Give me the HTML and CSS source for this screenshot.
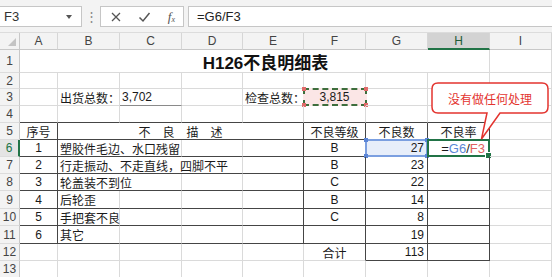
FILE: index.html
```html
<!DOCTYPE html>
<html>
<head>
<meta charset="utf-8">
<link rel="stylesheet" href="styles.css">
</head>
<body>
<div class="app">
  <div class="toolbar">
    <div class="namebox"><span>F3</span><span class="dd"></span></div>
    <div class="dots">⋮</div>
    <div class="fbtns">
      <svg width="12" height="12" viewBox="0 0 12 12"><path d="M2 2 L10 10 M10 2 L2 10" stroke="#555" stroke-width="1.3" fill="none"/></svg>
      <svg width="13" height="12" viewBox="0 0 13 12"><path d="M1.5 6.5 L5 10 L11.5 2" stroke="#555" stroke-width="1.5" fill="none"/></svg>
      <span class="fx">f<sub>x</sub></span>
    </div>
    <div class="finput">=G6/F3</div>
  </div>
  <div class="sheet">
    <!-- header row -->
    <div class="corner"><span class="tri"></span></div>
    <div class="ch">A</div><div class="ch">B</div><div class="ch">C</div><div class="ch">D</div><div class="ch">E</div><div class="ch">F</div><div class="ch">G</div><div class="ch hsel">H</div><div class="ch">I</div>
    <!-- row 1 -->
    <div class="rh">1</div>
    <div class="c title span8">H126不良明细表</div>
    <div class="c"></div>
    <!-- row 2 -->
    <div class="rh">2</div>
    <div class="c"></div><div class="c"></div><div class="c"></div><div class="c"></div><div class="c"></div><div class="c"></div><div class="c"></div><div class="c"></div><div class="c"></div>
    <!-- row 3 -->
    <div class="rh">3</div>
    <div class="c"></div>
    <div class="c">出货总数：</div>
    <div class="c ul">3,702</div>
    <div class="c"></div>
    <div class="c">检查总数：</div>
    <div class="c ctr marqcell"><div class="marq"><i class="k tl"></i><i class="k tr"></i><i class="k bl"></i><i class="k br2"></i></div><span class="mtext">3,815</span></div>
    <div class="c"></div><div class="c"></div><div class="c"></div>
    <!-- row 4 -->
    <div class="rh">4</div>
    <div class="c bb"></div><div class="c bb"></div><div class="c bb"></div><div class="c bb"></div><div class="c bb"></div><div class="c bb"></div><div class="c bb"></div><div class="c bb"></div><div class="c"></div>
    <!-- row 5 -->
    <div class="rh">5</div>
    <div class="c ctr bb br">序号</div>
    <div class="c ctr bb br span4">不　良　描　述</div>
    <div class="c ctr bb br">不良等级</div>
    <div class="c ctr bb br">不良数</div>
    <div class="c ctr bb br">不良率</div>
    <div class="c"></div>
    <!-- row 6 -->
    <div class="rh rsel">6</div>
    <div class="c ctr bb br">1</div>
    <div class="c bb span2">塑胶件毛边、水口残留</div>
    <div class="c bb"></div>
    <div class="c bb br"></div>
    <div class="c ctr bb br">B</div>
    <div class="c num bb br refcell"><div class="ref"><i class="k tl"></i><i class="k tr"></i><i class="k bl"></i><i class="k br2"></i></div><span class="rtext">27</span></div>
    <div class="c num bb br active"><div class="act"><i class="fh"></i></div><span class="ftext">=<span class="blue">G6</span>/<span class="red">F3</span></span></div>
    <div class="c"></div>
    <!-- row 7 -->
    <div class="rh">7</div>
    <div class="c ctr bb br">2</div>
    <div class="c bb span3">行走振动、不走直线，四脚不平</div>
    <div class="c bb br"></div>
    <div class="c ctr bb br">B</div>
    <div class="c num bb br">23</div>
    <div class="c bb br"></div>
    <div class="c"></div>
    <!-- row 8 -->
    <div class="rh">8</div>
    <div class="c ctr bb br">3</div>
    <div class="c bb span2">轮盖装不到位</div>
    <div class="c bb"></div>
    <div class="c bb br"></div>
    <div class="c ctr bb br">C</div>
    <div class="c num bb br">22</div>
    <div class="c bb br"></div>
    <div class="c"></div>
    <!-- row 9 -->
    <div class="rh">9</div>
    <div class="c ctr bb br">4</div>
    <div class="c bb">后轮歪</div>
    <div class="c bb"></div>
    <div class="c bb"></div>
    <div class="c bb br"></div>
    <div class="c ctr bb br">B</div>
    <div class="c num bb br">14</div>
    <div class="c bb br"></div>
    <div class="c"></div>
    <!-- row 10 -->
    <div class="rh">10</div>
    <div class="c ctr bb br">5</div>
    <div class="c bb">手把套不良</div>
    <div class="c bb"></div>
    <div class="c bb"></div>
    <div class="c bb br"></div>
    <div class="c ctr bb br">C</div>
    <div class="c num bb br">8</div>
    <div class="c bb br"></div>
    <div class="c"></div>
    <!-- row 11 -->
    <div class="rh">11</div>
    <div class="c ctr bb br">6</div>
    <div class="c bb">其它</div>
    <div class="c bb"></div>
    <div class="c bb"></div>
    <div class="c bb br"></div>
    <div class="c ctr bb br"></div>
    <div class="c num bb br">19</div>
    <div class="c bb br"></div>
    <div class="c"></div>
    <!-- row 12 -->
    <div class="rh">12</div>
    <div class="c"></div><div class="c"></div><div class="c"></div><div class="c"></div><div class="c"></div>
    <div class="c ctr br">合计</div>
    <div class="c num bb br">113</div>
    <div class="c bb br"></div>
    <div class="c"></div>
    <!-- row 13 -->
    <div class="rh">13</div>
    <div class="c"></div><div class="c"></div><div class="c"></div><div class="c"></div><div class="c"></div><div class="c"></div><div class="c"></div><div class="c"></div><div class="c"></div>
  </div>
  <div class="callout">
    <svg class="bubble" width="127" height="62" viewBox="0 0 127 62"><path d="M13 3 H117 Q123 3 123 9 V27 Q123 33 117 33 H75 L56.5 59 L62 33 H13 Q7 33 7 27 V9 Q7 3 13 3 Z" fill="#fff" stroke="#e3342f" stroke-width="1.5"/></svg>
    <div class="ctext">没有做任何处理</div>
  </div>
</div>
</body>
</html>
```

FILE: styles.css
```css
html, body {
  margin: 0;
  padding: 0;
}
body {
  width: 552px;
  height: 277px;
  overflow: hidden;
  background: #fff;
  font-family: "Liberation Sans", "Noto Sans CJK SC", sans-serif;
  font-size: 12px;
  color: #1a1a1a;
}
.app {
  position: relative;
  width: 552px;
  height: 277px;
  overflow: hidden;
}
.toolbar {
  height: 33px;
  box-sizing: border-box;
  padding-top: 6px;
  background: #f3f3f3;
  border-bottom: 1px solid #dcdcdc;
  display: flex;
  align-items: flex-start;
}
.namebox {
  width: 83px;
  height: 21px;
  margin-left: -1px;
  box-sizing: border-box;
  background: #fff;
  border: 1px solid #c6c6c6;
  display: flex;
  align-items: center;
  justify-content: space-between;
  padding: 0 9px 0 4px;
  font-size: 13px;
  color: #333;
}
.dd {
  width: 0;
  height: 0;
  border-left: 3px solid transparent;
  border-right: 3px solid transparent;
  border-top: 4px solid #555;
}
.dots {
  width: 18px;
  height: 21px;
  line-height: 21px;
  text-align: center;
  color: #888;
  font-size: 13px;
}
.fbtns {
  width: 84px;
  height: 21px;
  box-sizing: border-box;
  background: #fff;
  border: 1px solid #c6c6c6;
  display: flex;
  align-items: center;
  justify-content: space-between;
  padding: 0 8px 0 9px;
}
.fx {
  font-family: "Liberation Serif", serif;
  font-style: italic;
  font-size: 13px;
  color: #555;
}
.fx sub {
  font-size: 8px;
  vertical-align: -1px;
}
.finput {
  flex: 1;
  height: 21px;
  margin-left: 4px;
  margin-right: -1px;
  box-sizing: border-box;
  background: #fff;
  border: 1px solid #c6c6c6;
  padding-left: 8px;
  line-height: 19px;
  font-size: 13px;
  color: #222;
}
.sheet {
  display: grid;
  grid-template-columns: 20px 38px 62px 62px 61px 61px 62px 62px 62px 62px;
  grid-template-rows: 17px 23px 16px 17px 17px 17px 17px 17px 17px 18px 17px 18px 17px 17px;
}
.corner {
  position: relative;
  background: #f3f3f3;
  border-right: 1px solid #c8c8c8;
  border-bottom: 1px solid #c8c8c8;
  box-sizing: border-box;
}
.tri {
  position: absolute;
  right: 3px;
  bottom: 3px;
  width: 0;
  height: 0;
  border-left: 8px solid transparent;
  border-bottom: 8px solid #c4c4c4;
}
.ch {
  background: #f3f3f3;
  border-right: 1px solid #d6d6d6;
  border-bottom: 1px solid #c8c8c8;
  box-sizing: border-box;
  display: flex;
  align-items: center;
  justify-content: center;
  color: #444;
  font-size: 12px;
}
.hsel {
  background: #d3d3d3;
  border-bottom: 2px solid #217346;
  color: #1f5c38;
}
.rh {
  background: #f3f3f3;
  border-right: 1px solid #c8c8c8;
  border-bottom: 1px solid #dcdcdc;
  box-sizing: border-box;
  display: flex;
  align-items: center;
  justify-content: center;
  color: #444;
  font-size: 12px;
}
.rsel {
  background: #e4e4e4;
  border-right: 2px solid #217346;
  color: #217346;
}
.c {
  position: relative;
  border-right: 1px solid #dadada;
  border-bottom: 1px solid #dadada;
  box-sizing: border-box;
  display: flex;
  align-items: center;
  padding: 0 2px;
  white-space: nowrap;
  overflow: visible;
}
.ctr { justify-content: center; }
.num { justify-content: flex-end; padding-right: 3px; }
.bb { border-bottom-color: #454545; }
.br { border-right-color: #454545; }
.ul { border-bottom-color: #8a8a8a; }
.span2 { grid-column: span 2; }
.span3 { grid-column: span 3; }
.span4 { grid-column: span 4; }
.span8 { grid-column: span 8; }
.title {
  justify-content: center;
  padding-left: 24px;
  font-size: 17px;
  font-weight: bold;
  color: #111;
  border-right-color: #dadada;
}
.marq {
  position: absolute;
  left: -1px;
  top: -1px;
  right: -2px;
  bottom: -1px;
  border: 2px dashed #3d6e3d;
  background: #fbe6e6;
  box-sizing: border-box;
}
.mtext, .rtext, .ftext {
  position: relative;
}
.k {
  position: absolute;
  width: 4px;
  height: 4px;
  background: #e06a6a;
}
.tl { left: -3px; top: -3px; }
.tr { right: -3px; top: -3px; }
.bl { left: -3px; bottom: -3px; }
.br2 { right: -3px; bottom: -3px; }
.ref {
  position: absolute;
  left: -1px;
  top: -1px;
  right: -1px;
  bottom: -1px;
  border: 2px solid #7b9fe0;
  background: #e7eefa;
}
.ref .k { background: #5b85d6; }
.act {
  position: absolute;
  left: -1px;
  top: -1px;
  right: -1px;
  bottom: -1px;
  border: 2px solid #217346;
}
.fh {
  position: absolute;
  right: -4px;
  bottom: -4px;
  width: 5px;
  height: 5px;
  background: #217346;
  border: 1px solid #fff;
}
.ftext {
  font-size: 13px;
  padding-right: 1px;
}
.blue { color: #5b87d6; }
.red { color: #e26060; }
.callout {
  position: absolute;
  left: 425px;
  top: 80px;
  width: 127px;
  height: 62px;
}
.bubble {
  position: absolute;
  left: 0;
  top: 0;
}
.ctext {
  position: absolute;
  left: 7px;
  top: 3px;
  width: 116px;
  height: 30px;
  display: flex;
  align-items: center;
  justify-content: center;
  color: #e3342f;
  font-family: "Noto Sans CJK SC", sans-serif;
  font-size: 12px;
}
```
